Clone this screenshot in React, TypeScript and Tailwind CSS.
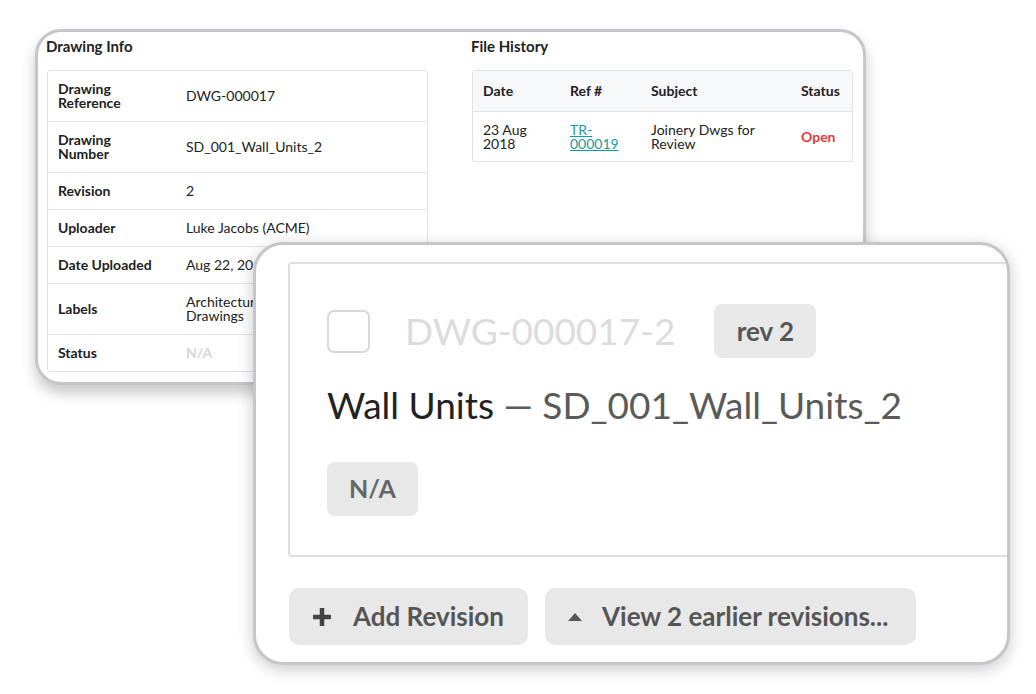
import React from 'react';

const infoRows = [
  { label: ['Drawing', 'Reference'], value: ['DWG-000017'] },
  { label: ['Drawing', 'Number'], value: ['SD_001_Wall_Units_2'] },
  { label: ['Revision'], value: ['2'] },
  { label: ['Uploader'], value: ['Luke Jacobs (ACME)'] },
  { label: ['Date Uploaded'], value: ['Aug 22, 2018'] },
  { label: ['Labels'], value: ['Architectural', 'Drawings'] },
  { label: ['Status'], value: ['N/A'], muted: true },
];

const Lines: React.FC<{ lines: string[] }> = ({ lines }) => (
  <>
    {lines.map((l, i) => (
      <div key={i}>{l}</div>
    ))}
  </>
);

const App: React.FC = () => {
  return (
    <div className="relative w-[1036px] h-[694px] overflow-hidden bg-white font-['Lato','Liberation_Sans',sans-serif] text-[#222]">
      {/* Back window */}
      <div className="absolute left-[35px] top-[29px] w-[831px] h-[356px] rounded-[26px] border-[3px] border-[#c4c6ca] bg-white shadow-[0_8px_14px_rgba(0,0,0,0.22)] overflow-hidden">
        <div className="flex gap-[44px] pl-[9px] pr-[10px] pt-[4px]">
          {/* Drawing Info */}
          <div className="w-[381px]">
            <div className="-ml-[1px] text-[15px] leading-[20px] font-bold mb-[14px]">Drawing Info</div>
            <div className="rounded-[3px] border border-[#e2e2e2] text-[14px] leading-[14px]">
              {infoRows.map((r, i) => (
                <div
                  key={i}
                  className={`flex items-center py-[11px] ${i < infoRows.length - 1 ? 'border-b border-[#e6e6e6]' : ''}`}
                >
                  <div className="w-[138px] pl-[10px] font-bold">
                    <Lines lines={r.label} />
                  </div>
                  <div className={r.muted ? 'font-bold text-[#d6d6d6]' : ''}>
                    <Lines lines={r.value} />
                  </div>
                </div>
              ))}
            </div>
          </div>

          {/* File History */}
          <div className="w-[381px]">
            <div className="-ml-[1px] text-[15px] leading-[20px] font-bold mb-[14px]">File History</div>
            <div className="rounded-[3px] border border-[#e2e2e2] text-[14px] leading-[14px] overflow-hidden">
              <div className="flex items-center h-[41px] bg-[#f7f8fa] border-b border-[#e2e2e2] font-bold">
                <div className="w-[97px] pl-[10px]">Date</div>
                <div className="w-[81px]">Ref #</div>
                <div className="w-[150px]">Subject</div>
                <div>Status</div>
              </div>
              <div className="flex items-center h-[49px]">
                <div className="w-[97px] pl-[10px]">
                  <div>23 Aug</div>
                  <div>2018</div>
                </div>
                <div className="w-[81px] text-[#169c9c] underline">
                  <div>TR-</div>
                  <div>000019</div>
                </div>
                <div className="w-[150px]">
                  <div>Joinery Dwgs for</div>
                  <div>Review</div>
                </div>
                <div className="font-bold text-[#e8383d]">Open</div>
              </div>
            </div>
          </div>
        </div>
      </div>

      {/* Front window (zoomed revision card) */}
      <div className="absolute left-[253px] top-[242px] w-[757px] h-[423px] rounded-[30px] border-[3px] border-[#c4c6ca] bg-white shadow-[0_4px_16px_rgba(0,0,0,0.22)] overflow-hidden">
        <div className="pl-[32px] pt-[17px]">
          <div className="w-[760px] h-[295px] border-2 border-[#dedede] rounded-[4px] pl-[37px] pt-[40px]">
            <div className="flex items-center h-[54px]">
              <div className="w-[43px] h-[43px] rounded-[7px] border-2 border-[#d8d8d8]" />
              <div className="ml-[35px] text-[37px] leading-[44px] text-[#dcdcdc]">DWG-000017-2</div>
              <div className="ml-[39px] h-[54px] w-[102px] rounded-[8px] bg-[#e8e8e8] flex items-center justify-center text-[26px] font-bold text-[#555]">
                rev 2
              </div>
            </div>
            <div className="mt-[25px] text-[37px] leading-[44px] whitespace-nowrap">
              <span className="text-[#222]">Wall Units</span>
              <span className="text-[#5a5a5a]"> — SD_001_Wall_Units_2</span>
            </div>
            <div className="mt-[35px] h-[54px] w-[91px] rounded-[8px] bg-[#e8e8e8] flex items-center justify-center text-[25px] font-bold text-[#666]">
              N/A
            </div>
          </div>

          <div className="flex gap-[17px] mt-[31px] pl-[1px]">
            <button className="h-[57px] w-[239px] rounded-[10px] bg-[#e8e8e8] flex items-center pl-[23px] gap-[21px] text-[26px] font-bold text-[#555]">
              <svg width="20" height="20" viewBox="0 0 20 20" className="shrink-0">
                <path d="M10 1v18M1 10h18" stroke="#444" strokeWidth="4.5" strokeLinecap="butt" />
              </svg>
              Add Revision
            </button>
            <button className="h-[57px] w-[371px] rounded-[10px] bg-[#e8e8e8] flex items-center pl-[23px] gap-[20px] text-[26px] font-bold text-[#555]">
              <svg width="14" height="8" viewBox="0 0 14 8" className="shrink-0">
                <path d="M7 0L14 8H0Z" fill="#555" />
              </svg>
              View 2 earlier revisions...
            </button>
          </div>
        </div>
      </div>
    </div>
  );
};

export default App;
